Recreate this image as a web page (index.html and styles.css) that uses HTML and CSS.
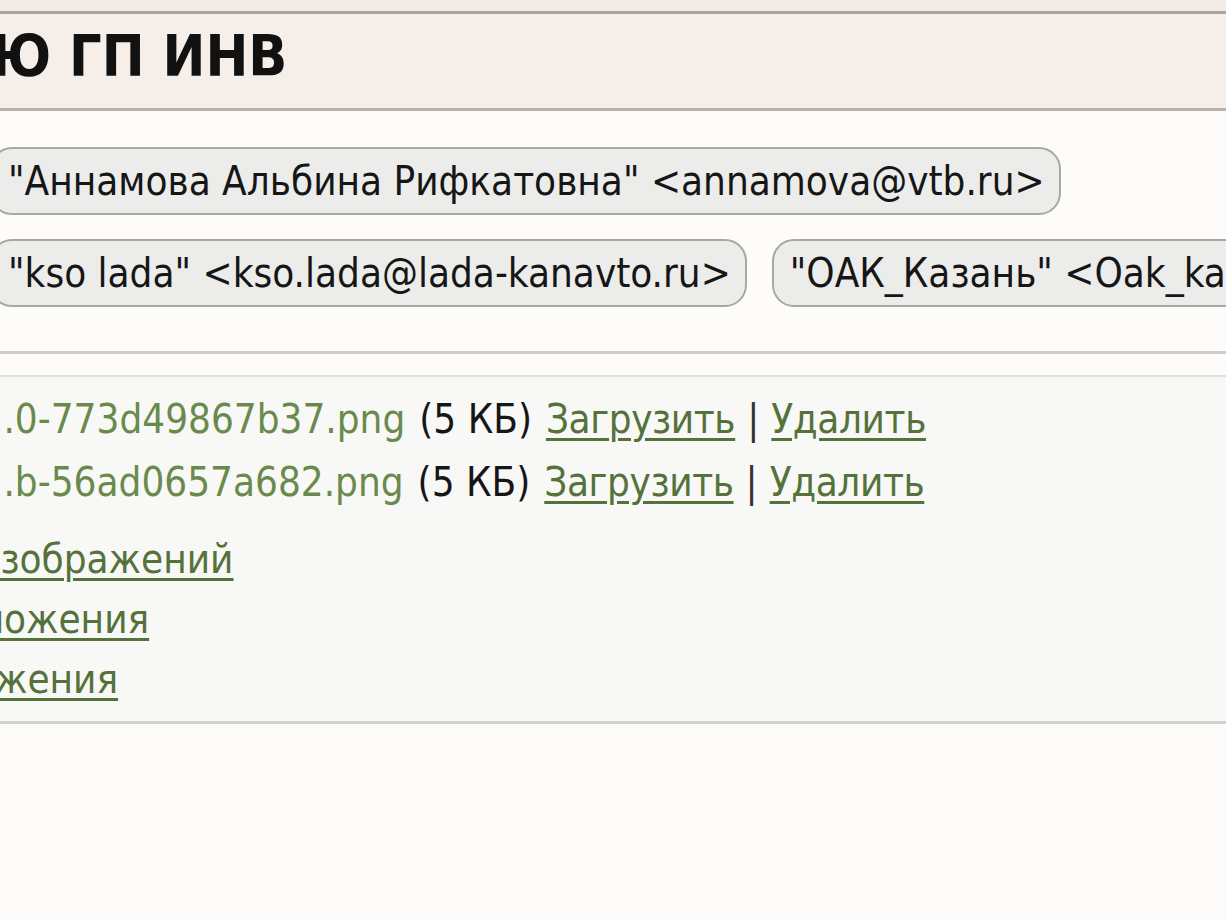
FILE: index.html
```html
<!DOCTYPE html>
<html lang="ru">
<head>
    <meta charset="UTF-8">
    <title>Письмо</title>
    <link rel="stylesheet" href="styles.css">
</head>
<body>
    <div class="top-strip"></div>
    <div class="subject">
        <h1 class="subject-text">Ю ГП ИНВ</h1>
    </div>

    <div class="recipients">
        <div class="chip-row">
            <span class="chip chip-first">"Аннамова Альбина Рифкатовна" &lt;annamova@vtb.ru&gt;</span>
        </div>
        <div class="chip-row">
            <span class="chip chip-first">"kso lada" &lt;kso.lada@lada-kanavto.ru&gt;</span>
            <span class="chip">"ОАК_Казань" &lt;Oak_kazan@oak.ru&gt;</span>
        </div>
    </div>

    <div class="attachments">
        <div class="file-row">
            <span class="file-name">..0-773d49867b37.png</span>
            <span class="file-size">(5 КБ)</span>
            <a href="#" class="link">Загрузить</a>
            <span class="sep">|</span>
            <a href="#" class="link">Удалить</a>
        </div>
        <div class="file-row">
            <span class="file-name">..b-56ad0657a682.png</span>
            <span class="file-size">(5 КБ)</span>
            <a href="#" class="link">Загрузить</a>
            <span class="sep">|</span>
            <a href="#" class="link">Удалить</a>
        </div>

        <div class="actions">
            <a href="#" class="link action a1">изображений</a>
            <a href="#" class="link action a2">ложения</a>
            <a href="#" class="link action a3">жения</a>
        </div>
    </div>
</body>
</html>
```

FILE: styles.css
```css
body {
    margin: 0;
    background-color: #fdfcfb;
    font-family: "DejaVu Sans Condensed", "DejaVu Sans", sans-serif;
    font-size: 40px;
    color: #161616;
    overflow: hidden;
    height: 920px;
}
.top-strip {
    height: 11px;
    background-color: #f2ebe6;
    border-bottom: 3px solid #a8a4a0;
}
.subject {
    height: 94px;
    background-color: #f5eee9;
    border-bottom: 3px solid #b8b2ae;
    display: flex;
    align-items: center;
    overflow: hidden;
}
.subject-text {
    margin: 0 0 10px -9px;
    font-size: 57px;
    font-weight: bold;
    color: #111;
    white-space: nowrap;
}
.recipients {
    padding: 36px 0 44px 0;
    border-bottom: 3px solid #cfcdcb;
    display: flex;
    flex-direction: column;
    gap: 24px;
}
.chip-row {
    display: flex;
    gap: 25px;
    white-space: nowrap;
}
.chip {
    display: inline-block;
    flex-shrink: 0;
    height: 64px;
    line-height: 64px;
    padding: 0 14px 0 16px;
    background-color: #ececeb;
    border: 2px solid #a9a7a5;
    border-radius: 22px;
    color: #161616;
}
.chip-first {
    margin-left: -10px;
}
.attachments {
    margin-top: 21px;
    border-top: 2px solid #e2e0de;
    border-bottom: 3px solid #d4d2d0;
    background-color: #f8f8f7;
    padding: 10px 0 12px 0;
}
.file-row {
    display: flex;
    gap: 14px;
    height: 63px;
    align-items: center;
    white-space: nowrap;
    margin-left: -8px;
}
.file-name {
    color: #6a8a4c;
}
.file-size {
    color: #161616;
}
.sep {
    color: #333;
    margin: 0 -2px;
}
.link {
    color: #54723a;
    text-decoration: underline;
    text-decoration-thickness: 3px;
    text-underline-offset: 5px;
}
.file-row .link {
    letter-spacing: -0.4px;
}
.actions {
    display: flex;
    flex-direction: column;
    align-items: flex-start;
    margin-top: 16px;
}
.action {
    height: 60px;
    line-height: 60px;
}
.a1 {
    margin-left: -23px;
}
.a2 {
    margin-left: -19px;
}
.a3 {
    margin-left: -5px;
}
```
